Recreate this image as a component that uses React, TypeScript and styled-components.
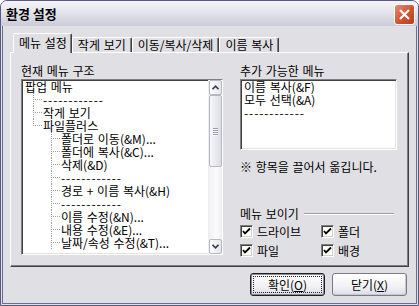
import styled, { createGlobalStyle } from 'styled-components'

const GlobalStyle = createGlobalStyle`
  html, body {
    margin: 0;
    padding: 0;
    background: #ffffff;
  }
  body {
    font-family: 'Noto Sans CJK KR', 'Noto Sans', sans-serif;
    font-size: 12px;
    color: #000;
  }
`

const Window = styled.div`
  width: 419px;
  height: 306px;
  box-sizing: border-box;
  display: flex;
  flex-direction: column;
  background: #e0dfe3;
  border: 1px solid #585880;
  border-radius: 7px 7px 0 0;
  overflow: hidden;
`

const TitleBar = styled.div`
  height: 25px;
  flex: none;
  display: flex;
  align-items: center;
  padding: 0 3px 0 5px;
  background: linear-gradient(#f4f4f8, #e4e4ec 45%, #cbcbd9 100%);
`

const Title = styled.div`
  flex: 1;
  font-weight: bold;
  font-size: 13px;
  line-height: 25px;
`

const CloseButton = styled.div`
  width: 21px;
  height: 21px;
  margin-top: 2px;
  box-sizing: border-box;
  border: 1px solid #ffffff;
  border-radius: 3px;
  background: linear-gradient(135deg, #e98c71, #d2512f 55%, #c23a1c);
  display: flex;
  align-items: center;
  justify-content: center;
`

const Body = styled.div`
  flex: 1;
  display: flex;
  flex-direction: column;
  margin: 0 1px 1px;
  border: 1px solid #6c6c94;
  border-top: none;
  padding: 7px 7px 7px;
`

const TabStrip = styled.div`
  height: 19px;
  display: flex;
  align-items: flex-end;
  padding-left: 3px;
`

const Tab = styled.div<{ $active?: boolean }>`
  position: relative;
  z-index: ${(p) => (p.$active ? 1 : 0)};
  height: ${(p) => (p.$active ? 20 : 15)}px;
  margin-bottom: ${(p) => (p.$active ? -1 : 0)}px;
  box-sizing: border-box;
  padding: ${(p) => (p.$active ? '2px 4px 0 5px' : '0 5px 0 5px')};
  background: #e0dfe3;
  border-top: 1px solid #ffffff;
  border-left: 1px solid #ffffff;
  border-right: 1px solid #404040;
  border-radius: 2px 2px 0 0;
  box-shadow: inset -1px 0 0 #808080;
  line-height: 13px;
  word-spacing: 1px;
  white-space: nowrap;
`

const Panel = styled.div`
  height: 215px;
  box-sizing: border-box;
  display: grid;
  grid-template-columns: 202px 157px;
  column-gap: 17px;
  padding: 11px 12px 0 10px;
  border-top: 1px solid #ffffff;
  border-left: 1px solid #ffffff;
  border-right: 1px solid #404040;
  border-bottom: 1px solid #404040;
  box-shadow: inset -1px -1px 0 #808080;
`

const Column = styled.div`
  display: flex;
  flex-direction: column;
`

const Label = styled.div`
  line-height: 13px;
  word-spacing: 1px;
  white-space: nowrap;
  margin-bottom: 2px;
`

const Sunken = styled.div<{ $height: number }>`
  height: ${(p) => p.$height}px;
  box-sizing: border-box;
  display: flex;
  background: #ffffff;
  border-top: 1px solid #808080;
  border-left: 1px solid #808080;
  border-right: 1px solid #ffffff;
  border-bottom: 1px solid #ffffff;
  box-shadow: inset 1px 1px 0 #404040, inset -1px -1px 0 #e4e2dc;
`

const List = styled.div`
  flex: 1;
  padding: 0 0 0 3px;
`

const Row = styled.div`
  height: 13px;
  display: flex;
  align-items: center;
`

const ItemText = styled.span<{ $sep?: boolean }>`
  display: block;
  height: 13px;
  line-height: 13px;
  white-space: nowrap;
  letter-spacing: ${(p) => (p.$sep ? '0.9px' : '0')};
  word-spacing: 1px;
`

type GuideKind = 'tee' | 'elbow' | 'blank' | 'pipe'

const dot = '#a3a3a3'
const vFull = `repeating-linear-gradient(${dot} 0 1px, transparent 1px 2px) 8px 0 / 1px 13px no-repeat`
const vHalf = `repeating-linear-gradient(${dot} 0 1px, transparent 1px 2px) 8px 0 / 1px 7px no-repeat`
const hLine = `repeating-linear-gradient(to right, ${dot} 0 1px, transparent 1px 2px) 10px 6px / 7px 1px no-repeat`

const guideBg: Record<GuideKind, string> = {
  tee: `${hLine}, ${vFull}`,
  elbow: `${hLine}, ${vHalf}`,
  pipe: vFull,
  blank: 'none',
}

const Guide = styled.span<{ $kind: GuideKind }>`
  flex: none;
  width: 18px;
  height: 13px;
  background: ${(p) => guideBg[p.$kind]};
`

const ScrollBar = styled.div`
  width: 13px;
  flex: none;
  display: flex;
  flex-direction: column;
  background: linear-gradient(to right, #f1f1f4, #fbfbfc 60%, #eeeef2);
  border-left: 1px solid #eeeef2;
`

const ScrollButton = styled.div`
  height: 15px;
  flex: none;
  box-sizing: border-box;
  border: 1px solid #b7b6c8;
  border-radius: 2px;
  background: linear-gradient(to right, #fdfdfe, #e4e4ec);
  display: flex;
  align-items: center;
  justify-content: center;
`

const Thumb = styled.div`
  height: 72px;
  flex: none;
  box-sizing: border-box;
  border: 1px solid #b7b6c8;
  border-radius: 2px;
  background: linear-gradient(to right, #f7f7fa, #dcdce6);
  display: flex;
  flex-direction: column;
  align-items: center;
  justify-content: center;
  gap: 1px;
`

const Grip = styled.span`
  width: 5px;
  height: 1px;
  background: #9c9cb0;
  box-shadow: 0 1px 0 #ffffff;
`

const Track = styled.div`
  flex: 1;
`

const Note = styled.div`
  margin-top: 10px;
  line-height: 13px;
  word-spacing: 1px;
  white-space: nowrap;
`

const GroupHead = styled.div`
  margin-top: 34px;
  display: flex;
  align-items: center;
  gap: 5px;
  line-height: 13px;
  word-spacing: 1px;
  padding-right: 3px;
  white-space: nowrap;
`

const Etch = styled.span`
  flex: 1;
  height: 1px;
  background: #a0a0a8;
  box-shadow: 0 1px 0 #ffffff;
`

const CheckGrid = styled.div`
  margin-top: 2px;
  display: grid;
  grid-template-columns: 81px 70px;
  grid-auto-rows: 19px;
  align-items: center;
`

const CheckItem = styled.label`
  display: flex;
  align-items: center;
  gap: 4px;
  line-height: 13px;
`

const Box = styled.span`
  width: 13px;
  height: 13px;
  box-sizing: border-box;
  display: flex;
  align-items: center;
  justify-content: center;
  background: #fffffa;
  border-top: 1px solid #808080;
  border-left: 1px solid #808080;
  border-right: 1px solid #ffffff;
  border-bottom: 1px solid #ffffff;
  box-shadow: inset 1px 1px 0 #404040, inset -1px -1px 0 #d4d0c8;
`

const ButtonRow = styled.div`
  margin-top: 6px;
  display: flex;
  justify-content: flex-end;
  gap: 7px;
  padding-right: 2px;
`

const Button = styled.div<{ $default?: boolean }>`
  width: 75px;
  height: 23px;
  box-sizing: border-box;
  padding: ${(p) => (p.$default ? '2px' : '0')};
  border: 1px solid ${(p) => (p.$default ? '#202020' : '#7a7a8a')};
  border-radius: 3px;
  background: linear-gradient(#ffffff, #f2f2f5 60%, #dcdce4);
  box-shadow: ${(p) => (p.$default ? 'inset 0 0 0 1px #8a8a9c' : 'inset -1px -1px 0 #c8c8d4')};
  display: flex;
`

const ButtonFace = styled.span<{ $focus?: boolean }>`
  flex: 1;
  display: flex;
  align-items: center;
  justify-content: center;
  border: 1px dotted ${(p) => (p.$focus ? '#202020' : 'transparent')};
  line-height: 13px;
`

const Mnemonic = styled.span`
  text-decoration: underline;
`

const CheckMark = () => (
  <svg width="9" height="9" viewBox="0 0 9 9">
    <polyline points="1,4 3,6.5 8,1.5" fill="none" stroke="#000" strokeWidth="1.8" />
  </svg>
)

const Chevron = ({ up }: { up?: boolean }) => (
  <svg width="7" height="5" viewBox="0 0 7 5">
    <polyline
      points={up ? '0.5,4.2 3.5,1.2 6.5,4.2' : '0.5,0.8 3.5,3.8 6.5,0.8'}
      fill="none"
      stroke="#3c3c58"
      strokeWidth="1.6"
    />
  </svg>
)

type TreeNode = { text: string; guides: GuideKind[]; sep?: boolean }

const tree: TreeNode[] = [
  { text: '팝업 메뉴', guides: [] },
  { text: '------------', guides: ['tee'], sep: true },
  { text: '작게 보기', guides: ['tee'] },
  { text: '파일플러스', guides: ['elbow'] },
  { text: '폴더로 이동(&M)...', guides: ['blank', 'tee'] },
  { text: '폴더에 복사(&C)...', guides: ['blank', 'tee'] },
  { text: '삭제(&D)', guides: ['blank', 'tee'] },
  { text: '------------', guides: ['blank', 'tee'], sep: true },
  { text: '경로 + 이름 복사(&H)', guides: ['blank', 'tee'] },
  { text: '------------', guides: ['blank', 'tee'], sep: true },
  { text: '이름 수정(&N)...', guides: ['blank', 'tee'] },
  { text: '내용 수정(&E)...', guides: ['blank', 'tee'] },
  { text: '날짜/속성 수정(&T)...', guides: ['blank', 'tee'] },
]

const extras = [
  { text: '이름 복사(&F)' },
  { text: '모두 선택(&A)' },
  { text: '------------', sep: true },
]

const checks = ['드라이브', '폴더', '파일', '배경']

const tabs = ['메뉴 설정', '작게 보기', '이동/복사/삭제', '이름 복사']

function App() {
  return (
    <>
      <GlobalStyle />
      <Window>
        <TitleBar>
          <Title>환경 설정</Title>
          <CloseButton>
            <svg width="13" height="13" viewBox="0 0 13 13">
              <path d="M2 2 L11 11 M11 2 L2 11" stroke="#ffffff" strokeWidth="2.2" />
            </svg>
          </CloseButton>
        </TitleBar>
        <Body>
          <TabStrip>
            {tabs.map((t, i) => (
              <Tab key={t} $active={i === 0}>
                {t}
              </Tab>
            ))}
          </TabStrip>
          <Panel>
            <Column>
              <Label>현재 메뉴 구조</Label>
              <Sunken $height={176}>
                <List>
                  {tree.map((n, i) => (
                    <Row key={i}>
                      {n.guides.map((g, j) => (
                        <Guide key={j} $kind={g} />
                      ))}
                      <ItemText $sep={n.sep}>{n.text}</ItemText>
                    </Row>
                  ))}
                </List>
                <ScrollBar>
                  <ScrollButton>
                    <Chevron up />
                  </ScrollButton>
                  <Thumb>
                    <Grip />
                    <Grip />
                    <Grip />
                    <Grip />
                  </Thumb>
                  <Track />
                  <ScrollButton>
                    <Chevron />
                  </ScrollButton>
                </ScrollBar>
              </Sunken>
            </Column>
            <Column>
              <Label>추가 가능한 메뉴</Label>
              <Sunken $height={71}>
                <List>
                  {extras.map((n, i) => (
                    <Row key={i}>
                      <ItemText $sep={n.sep}>{n.text}</ItemText>
                    </Row>
                  ))}
                </List>
              </Sunken>
              <Note>※ 항목을 끌어서 옮깁니다.</Note>
              <GroupHead>
                메뉴 보이기
                <Etch />
              </GroupHead>
              <CheckGrid>
                {checks.map((c) => (
                  <CheckItem key={c}>
                    <Box>
                      <CheckMark />
                    </Box>
                    {c}
                  </CheckItem>
                ))}
              </CheckGrid>
            </Column>
          </Panel>
          <ButtonRow>
            <Button $default>
              <ButtonFace $focus>
                확인(<Mnemonic>O</Mnemonic>)
              </ButtonFace>
            </Button>
            <Button>
              <ButtonFace>
                닫기(<Mnemonic>X</Mnemonic>)
              </ButtonFace>
            </Button>
          </ButtonRow>
        </Body>
      </Window>
    </>
  )
}

export default App
